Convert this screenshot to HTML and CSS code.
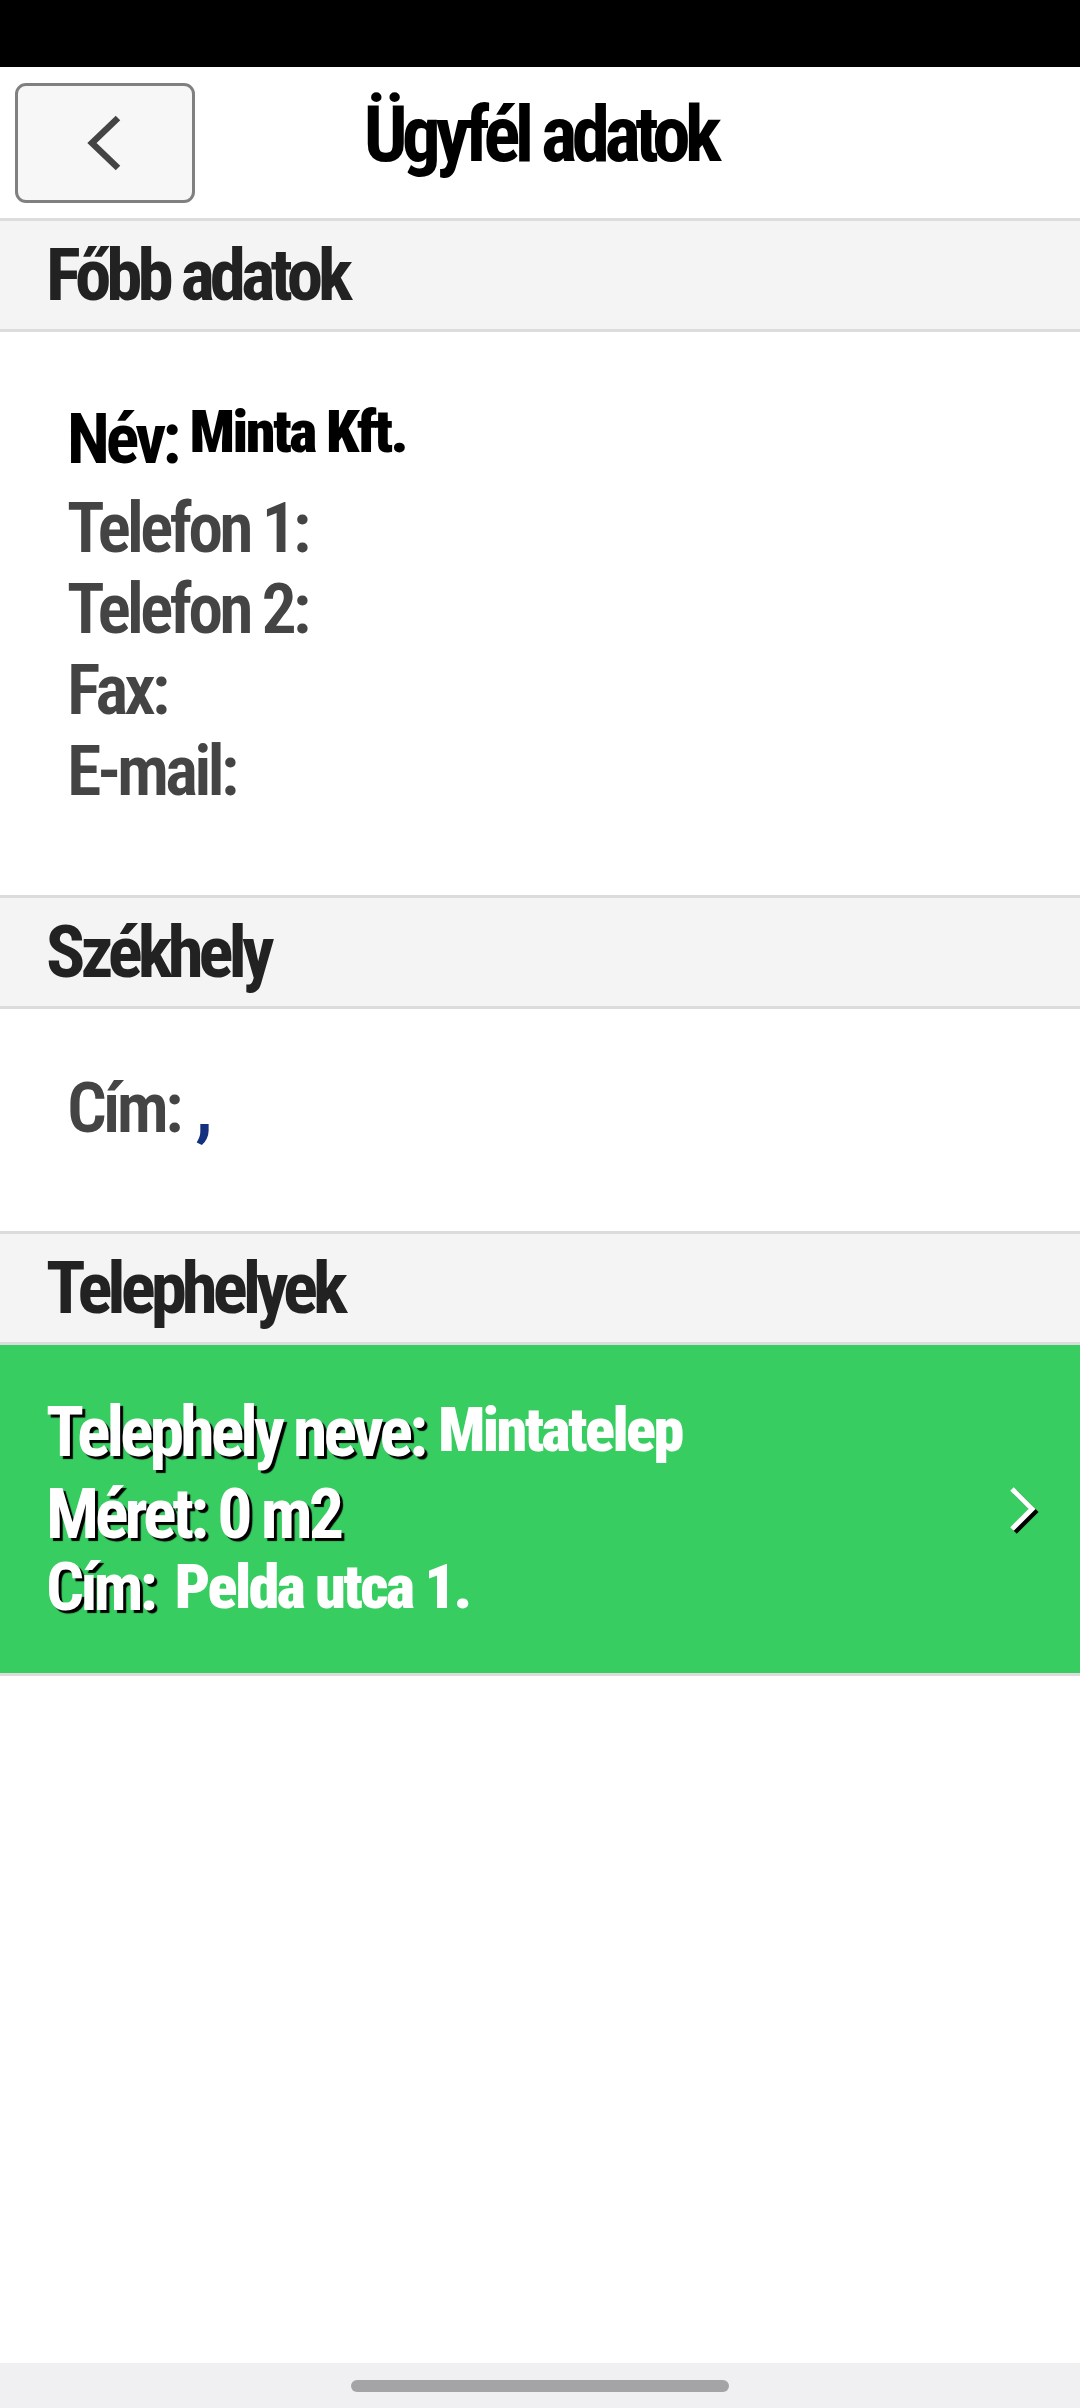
FILE: index.html
```html
<!DOCTYPE html>
<html lang="hu">
<head>
<meta charset="utf-8">
<title>Ügyfél adatok</title>
<link rel="stylesheet" href="styles.css">
</head>
<body>
<div class="status"></div>
<header class="topbar">
  <button class="back" type="button" aria-label="Vissza">
    <svg class="back-icon" width="40" height="60" viewBox="0 0 40 60"><path d="M33 5 L7 30 L33 55" fill="none" stroke="#444" stroke-width="6.5" stroke-linejoin="miter" stroke-linecap="butt"/></svg>
  </button>
  <h1 class="title">Ügyfél adatok</h1>
  <div class="topbar-end"></div>
</header>

<section class="sec-head">Főbb adatok</section>
<div class="info info-main">
  <div class="row row-name"><span class="lbl lbl-dark">Név:</span><span class="val">Minta Kft.</span></div>
  <div class="row"><span class="lbl">Telefon 1:</span></div>
  <div class="row"><span class="lbl">Telefon 2:</span></div>
  <div class="row"><span class="lbl">Fax:</span></div>
  <div class="row"><span class="lbl">E-mail:</span></div>
</div>

<section class="sec-head">Székhely</section>
<div class="info info-addr">
  <div class="row"><span class="lbl">Cím:</span><span class="comma">,</span></div>
</div>

<section class="sec-head">Telephelyek</section>
<div class="site">
  <div class="site-text">
    <div class="row site-row1"><span class="lbl lbl-white">Telephely neve:</span><span class="val val-white val-first">Mintatelep</span></div>
    <div class="row site-row2"><span class="lbl lbl-white">Méret: 0 m2</span></div>
    <div class="row site-row3"><span class="lbl lbl-white lbl-small">Cím:</span><span class="val val-white val-last">Pelda utca 1.</span></div>
  </div>
  <svg class="site-arrow" width="40" height="60" viewBox="0 0 40 60"><path d="M8 12 L28 32 L8 52" fill="none" stroke="#000" stroke-width="5"/><path d="M5 9 L25 29 L5 49" fill="none" stroke="#fff" stroke-width="5"/></svg>
</div>

<div class="spacer"></div>
<div class="home"><div class="home-bar"></div></div>
</body>
</html>
```
FILE: styles.css
```css
* { box-sizing: border-box; }
html, body { margin: 0; padding: 0; }
body {
  width: 1080px;
  height: 2408px;
  display: flex;
  flex-direction: column;
  background: #ffffff;
  font-family: "Roboto", "DejaVu Sans Condensed", sans-serif;
  font-stretch: 75%;
  font-weight: 700;
  overflow: hidden;
}
.status { height: 67px; background: #000; flex: none; }

.topbar {
  height: 151px;
  flex: none;
  display: grid;
  grid-template-columns: 1fr auto 1fr;
  align-items: center;
  padding: 0 15px;
}
.back {
  width: 180px;
  height: 120px;
  border: 3px solid #808080;
  border-radius: 11px;
  background: #f7f7f7;
  display: flex;
  align-items: center;
  justify-content: center;
  padding: 0;
  margin: 0;
}
.back-icon { display: block; }
.title {
  margin: 0 0 14px 0;
  font-size: 77px;
  line-height: 1;
  font-weight: 700;
  color: #000;
  letter-spacing: -5.5px;
}

.sec-head {
  flex: none;
  height: 114px;
  border-top: 3px solid #dcdcdc;
  border-bottom: 3px solid #dcdcdc;
  background: #f4f4f4;
  display: flex;
  align-items: center;
  padding-left: 46px;
  font-size: 73px;
  line-height: 1;
  font-weight: 700;
  color: #222;
  letter-spacing: -5px;
}

.info { flex: none; padding-left: 67px; }
.info-main { height: 563px; padding-top: 67px; }
.info-addr { height: 222px; padding-top: 59px; }

.row {
  display: flex;
  align-items: flex-start;
  font-size: 70px;
  line-height: 81px;
  white-space: nowrap;
}
.row-name { margin-bottom: 8px; }
.lbl { color: #444; font-weight: 600; letter-spacing: -4px; }
.lbl-dark { color: #000; font-weight: 700; }
.val {
  font-size: 60px;
  line-height: 60px;
  font-weight: 900;
  margin-top: 3px;
  margin-left: 12px;
  color: #000;
  letter-spacing: -2.5px;
}
.comma { color: #163080; margin-left: 16px; }

.site {
  flex: none;
  height: 331px;
  background: #37cd61;
  border-bottom: 3px solid #dcdcdc;
  display: flex;
  align-items: flex-start;
  justify-content: space-between;
  padding: 47px 33px 0 46px;
}
.site-text { display: flex; flex-direction: column; }
.site-row2 { line-height: 72px; margin-top: 5px; }
.site-row3 { line-height: 74px; }
.lbl-white { color: #fff; font-weight: 700; text-shadow: 3px 3px 1px #000; }
.lbl-small { font-size: 67px; }
.val-white { color: #fff; margin-left: 14px; font-size: 62px; }
.val-first { margin-top: 8px; }
.val-last { margin-top: 7px; margin-left: 21px; }
.site-arrow { display: block; align-self: center; margin-top: -46px; }

.spacer { flex: 1; }
.home {
  flex: none;
  height: 45px;
  background: #f0f0f2;
  display: flex;
  justify-content: center;
  padding-top: 17px;
}
.home-bar {
  width: 378px;
  height: 12px;
  border-radius: 6px;
  background: #a4a4a6;
}
```
